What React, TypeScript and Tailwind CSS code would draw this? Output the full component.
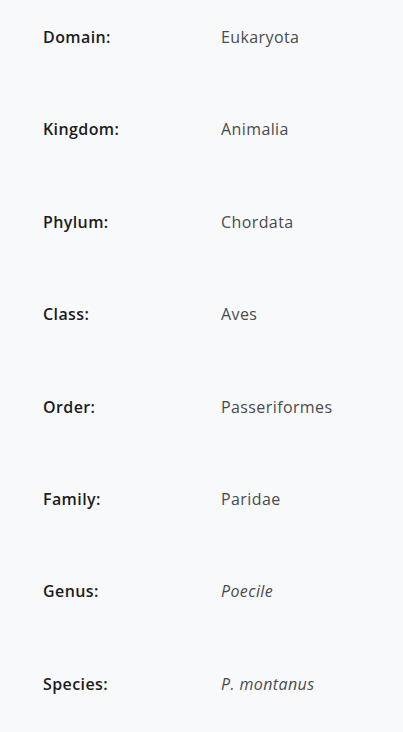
const rows: { label: string; value: string; italic?: boolean }[] = [
  { label: 'Domain:', value: 'Eukaryota' },
  { label: 'Kingdom:', value: 'Animalia' },
  { label: 'Phylum:', value: 'Chordata' },
  { label: 'Class:', value: 'Aves' },
  { label: 'Order:', value: 'Passeriformes' },
  { label: 'Family:', value: 'Paridae' },
  { label: 'Genus:', value: 'Poecile', italic: true },
  { label: 'Species:', value: 'P. montanus', italic: true },
];

export default function App() {
  return (
    <div className="min-h-screen w-full bg-[#f8f9fb] font-['Open_Sans',sans-serif] text-base tracking-[0.4px]">
      <div className="flex flex-col gap-[68.4px] px-[43px] pt-[25px]">
        {rows.map((r) => (
          <div key={r.label} className="flex h-6 items-center leading-6">
            <span className="w-[178px] shrink-0 font-semibold text-[#1c1c1e]">{r.label}</span>
            <span className={r.italic ? 'italic text-[#4a4a4d]' : 'text-[#4a4a4d]'}>{r.value}</span>
          </div>
        ))}
      </div>
    </div>
  );
}
